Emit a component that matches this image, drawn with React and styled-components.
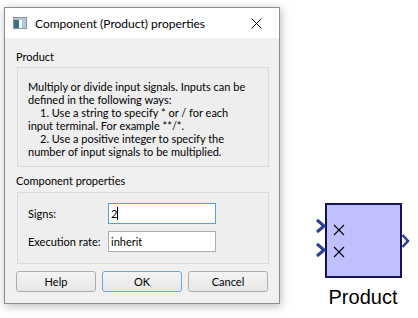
import React from "react";
import styled, { createGlobalStyle } from "styled-components";

const Global = createGlobalStyle`
  html, body { margin: 0; padding: 0; background: #ffffff; overflow: hidden; }
  body { width: 418px; height: 318px; }
  * { box-sizing: border-box; }
`;

const UI_FONT = `Lato, "Noto Sans", sans-serif`;

const Page = styled.div`
  display: flex;
  align-items: flex-start;
  padding: 7px 0 0 4px;
  width: 418px;
  height: 318px;
  font-family: ${UI_FONT};
  font-size: 11px;
  line-height: 13px;
  color: #000;
`;

const Dialog = styled.div`
  width: 276px;
  height: 297px;
  border: 1px solid #8c8c8c;
  background: #f0f0f0;
  display: flex;
  flex-direction: column;
  box-shadow: 1px 2px 9px rgba(0, 0, 0, 0.28);
`;

const TitleBar = styled.div`
  height: 30px;
  background: #ffffff;
  display: flex;
  align-items: center;
  padding: 0 0 0 8px;
  flex-shrink: 0;
`;

const TitleText = styled.span`
  margin-left: 8px;
  font-size: 12px;
  line-height: 15px;
  flex: 1;
  white-space: nowrap;
`;

const CloseBox = styled.div`
  width: 46px;
  height: 30px;
  display: flex;
  align-items: center;
  justify-content: center;
`;

const Body = styled.div`
  flex: 1;
  display: flex;
  flex-direction: column;
  padding: 12px 10px 0 11px;
`;

const SectionLabel = styled.div`
  line-height: 14px;
  height: 14px;
  margin-top: ${(p) => p.$gap || 0}px;
  white-space: nowrap;
`;

const GroupBox = styled.div`
  margin-top: ${(p) => p.$gap}px;
  margin-left: 1px;
  height: ${(p) => p.$h}px;
  border: 1px solid #dadada;
  background: #eeeeee;
  padding: ${(p) => p.$pad};
`;

const Line = styled.div`
  line-height: 13px;
  height: 13px;
  white-space: nowrap;
  padding-left: ${(p) => (p.$indent ? 12 : 0)}px;
`;

const FieldRow = styled.div`
  display: grid;
  grid-template-columns: 80px 108px;
  align-items: center;
  height: 21px;
  & + & { margin-top: 7px; }
`;

const FieldLabel = styled.span`
  white-space: nowrap;
`;

const Input = styled.div`
  height: 21px;
  border: 1px solid ${(p) => (p.$focus ? "#569de5" : "#abadb3")};
  background: #ffffff;
  display: flex;
  align-items: center;
  padding-left: 2px;
  white-space: nowrap;
`;

const Caret = styled.span`
  display: inline-block;
  width: 1px;
  height: 13px;
  background: #000;
`;

const ButtonRow = styled.div`
  display: flex;
  gap: 6px;
  margin-top: 7px;
`;

const Button = styled.div`
  width: 80px;
  height: 21px;
  border: 1px solid ${(p) => (p.$default ? "#69a6e3" : "#adadad")};
  border-radius: 3px;
  background: linear-gradient(#f4f4f4, #e7e7e7);
  display: flex;
  align-items: center;
  justify-content: center;
`;

const Canvas = styled.div`
  display: flex;
  flex-direction: column;
  align-items: center;
  margin: 193px 0 0 35px;
  width: 96px;
`;

const BlockLabel = styled.div`
  margin-top: 6px;
  font-family: "Liberation Sans", Arial, sans-serif;
  font-size: 20px;
  line-height: 23px;
  color: #000;
  white-space: nowrap;
`;

const AppIcon = () => (
  <svg width="14" height="12" viewBox="0 0 14 12">
    <rect x="0.5" y="0.5" width="13" height="11" fill="#d7e4ee" stroke="#8894a0" />
    <rect x="1" y="1" width="12" height="2" fill="#b9c6d2" />
    <rect x="1" y="3" width="5" height="8" fill="#3f6f86" />
    <rect x="6" y="3" width="3" height="8" fill="#ffffff" />
    <rect x="9" y="3" width="4" height="8" fill="#a9cbe6" />
  </svg>
);

const CloseIcon = () => (
  <svg width="11" height="11" viewBox="0 0 11 11">
    <path d="M0.5 0.5 L10.5 10.5 M10.5 0.5 L0.5 10.5" stroke="#000" strokeWidth="1" fill="none" />
  </svg>
);

const ProductBlock = () => (
  <svg width="96" height="80" viewBox="0 0 96 80">
    <rect x="11" y="4" width="75" height="73" fill="#c0c0ff" stroke="#13135a" strokeWidth="2" />
    <polyline points="2,20 9,26 2,32" fill="none" stroke="#2e3b94" strokeWidth="3" />
    <polyline points="2,44 9,50 2,56" fill="none" stroke="#2e3b94" strokeWidth="3" />
    <path d="M19 25 L29 35 M29 25 L19 35" stroke="#000" strokeWidth="1.1" />
    <path d="M19 47 L29 57 M29 47 L19 57" stroke="#000" strokeWidth="1.1" />
    <polyline points="87.5,35 93,41 87.5,47" fill="none" stroke="#2e3b94" strokeWidth="2.5" />
  </svg>
);

export default function App() {
  return (
    <>
      <Global />
      <Page>
        <Dialog>
          <TitleBar>
            <AppIcon />
            <TitleText>Component (Product) properties</TitleText>
            <CloseBox>
              <CloseIcon />
            </CloseBox>
          </TitleBar>
          <Body>
            <SectionLabel>Product</SectionLabel>
            <GroupBox $gap={3} $h={100} $pad="12px 0 0 10px">
              <Line>Multiply or divide input signals. Inputs can be</Line>
              <Line>defined in the following ways:</Line>
              <Line $indent>1. Use a string to specify * or / for each</Line>
              <Line>input terminal. For example **/*.</Line>
              <Line $indent>2. Use a positive integer to specify the</Line>
              <Line>number of input signals to be multiplied.</Line>
            </GroupBox>
            <SectionLabel $gap={7}>Component properties</SectionLabel>
            <GroupBox $gap={4} $h={72} $pad="10px 0 0 10px">
              <FieldRow>
                <FieldLabel>Signs:</FieldLabel>
                <Input $focus>
                  2<Caret />
                </Input>
              </FieldRow>
              <FieldRow>
                <FieldLabel>Execution rate:</FieldLabel>
                <Input>inherit</Input>
              </FieldRow>
            </GroupBox>
            <ButtonRow>
              <Button>Help</Button>
              <Button $default>OK</Button>
              <Button>Cancel</Button>
            </ButtonRow>
          </Body>
        </Dialog>
        <Canvas>
          <ProductBlock />
          <BlockLabel>Product</BlockLabel>
        </Canvas>
      </Page>
    </>
  );
}
